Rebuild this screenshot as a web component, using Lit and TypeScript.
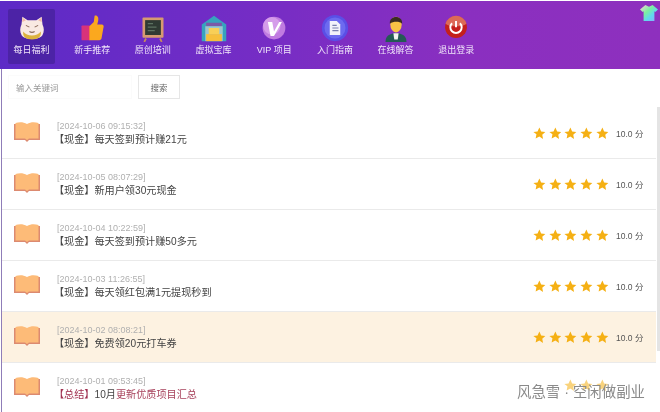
import { LitElement, html, css, svg } from "lit";
import { customElement } from "lit/decorators.js";

const icons: Record<string, unknown> = {
  cat: svg`<path d="M5 3l6 4h10l6-4 1 9c2 4 2 8 0 12-3 6-21 6-24 0-2-4-2-8 0-12z" fill="#f9e9e2"/><path d="M6 20c4 6 16 6 20 0 1 6-3 9-10 9S5 26 6 20z" fill="#dcb23e"/><path d="M9 13l4 2M23 13l-4 2M13 20q3 2 6 0" stroke="#8a6a5a" stroke-width="1.2" fill="none"/><path d="M5 4l4 3-4 2zM27 4l-4 3 4 2z" fill="#f0b8a8"/>`,
  thumb: svg`<rect x="4" y="13" width="10" height="17" rx="1" fill="#d8327a"/><path d="M13 14l5-5 1-7c3-1 5 2 4 6l-1 4h5c2 0 3 2 2 4l-2 11c0 2-2 3-4 3H13z" fill="#fba81e"/>`,
  board: svg`<path d="M8 28l-2 4M24 28l2 4" stroke="#c58a5e" stroke-width="2"/><rect x="4" y="4" width="24" height="23" rx="1" fill="#d69a70"/><rect x="7" y="7" width="18" height="17" fill="#2f3a33"/><path d="M10 11h6M10 15h10M10 19h8" stroke="#5d7261" stroke-width="1.5"/>`,
  store: svg`<path d="M2 12L16 2l14 10v19H2z" fill="#37a3bd"/><path d="M7 10h18v4H7z" fill="#7a5aa8"/><rect x="6" y="14" width="20" height="17" fill="#9bc5cf"/><rect x="10" y="16" width="12" height="7" fill="#f8cf57"/><rect x="7" y="23" width="18" height="8" fill="#f6bf3c"/>`,
  vip: svg`<circle cx="16" cy="16" r="13" fill="#c07be0"/><circle cx="13.500" cy="13.500" r="10" fill="#d59cea"/><path d="M9 9h5l2 11 6-11h3l-9 16h-4z" fill="#fff"/>`,
  doc: svg`<circle cx="16" cy="16" r="15" fill="#5a4fe6"/><circle cx="16" cy="16" r="12" fill="#6d6af0"/><path d="M10 8h8l4 4v12H10z" fill="#f2f2fa"/><path d="M13 13h5M13 16h7M13 19h7" stroke="#7a80b0" stroke-width="1.200"/>`,
  man: svg`<path d="M4 32c0-7 5-10 12-10s12 3 12 10z" fill="#245a55"/><path d="M13 22h6l-1 7h-4z" fill="#f4f4f0"/><ellipse cx="16" cy="12" rx="6.500" ry="9" fill="#f8c345"/><path d="M9 11C8 1 24 1 23 11c-3-3-10-3-14 0z" fill="#3a2c22"/>`,
  power: svg`<circle cx="16" cy="15" r="12.500" fill="#c4201c"/><path d="M4 11a12.500 12.500 0 0 1 24 0c-5 4-19 4-24 0z" fill="#dc6a58"/><path d="M11.500 10.500a6.500 6.500 0 1 0 9 0" stroke="#fff" stroke-width="2.200" fill="none"/><path d="M16 8v7" stroke="#fff" stroke-width="2.200"/>`,
};

const nav = [
  ["cat", "每日福利"], ["thumb", "新手推荐"], ["board", "原创培训"], ["store", "虚拟宝库"],
  ["vip", "VIP 项目"], ["doc", "入门指南"], ["man", "在线解答"], ["power", "退出登录"],
];

const rows = [
  ["2024-10-06 09:15:32", "【现金】", "", "每天签到预计赚21元"],
  ["2024-10-05 08:07:29", "【现金】", "", "新用户领30元现金"],
  ["2024-10-04 10:22:59", "【现金】", "", "每天签到预计赚50多元"],
  ["2024-10-03 11:26:55", "【现金】", "", "每天领红包满1元提现秒到"],
  ["2024-10-02 08:08:21", "【现金】", "", "免费领20元打车券"],
  ["2024-10-01 09:53:45", "【总结】", "10月", "更新优质项目汇总"],
];

@customElement("app-root")
export class AppRoot extends LitElement {
  static styles = css`
    :host {
      display: block; position: relative; width: 660px; height: 412px; overflow: hidden; background: #fff;
      font-family: "Liberation Sans", "Noto Sans CJK SC", sans-serif; color: #333; filter: blur(0.4px);
    }
    .top { height: 68px; margin-top: 1px; display: flex; padding: 8px 0 0 8px; box-sizing: border-box;
      background: linear-gradient(90deg, #5c2ac6 0%, #6f2cc6 30%, #8a2fc0 70%, #8e30be 100%); }
    .item { width: 47px; height: 55px; margin-right: 13.700px; display: flex; flex-direction: column; align-items: center;
      padding-top: 5px; box-sizing: border-box; color: #efe4f9; font-size: 9px; line-height: 11px; white-space: nowrap; flex: none; }
    .item.on { background: #4c23a6; border-radius: 2px; }
    .item svg { width: 28px; height: 28px; margin-bottom: 3px; }
    .shirt { position: absolute; right: 2px; top: 4px; width: 18px; height: 18px; }
    .main { margin-left: 1px; border-left: 1px solid #8f7db8; height: 343px; }
    .search { height: 39px; display: flex; gap: 6px; padding: 6px 0 0 6px; box-sizing: border-box; }
    .input { width: 124px; height: 24px; box-sizing: border-box; border: 1px solid #fbfbfb; font-size: 8.500px; color: #999;
      display: flex; align-items: center; padding-left: 7px; }
    .btn { width: 42px; height: 24px; box-sizing: border-box; border: 1px solid #e6e6e6; font-size: 8.500px; color: #666;
      display: flex; align-items: center; justify-content: center; }
    .row { height: 51px; box-sizing: border-box; display: flex; align-items: center; width: 654px; border-bottom: 1px solid #eaeaea; padding-left: 12px; }
    .row.hot { background: #fdf2e1; }
    .book { width: 26px; height: 22px; flex: none; margin-right: 14px; margin-top: -2px; }
    .text { flex: 1; }
    .date { font-size: 9px; color: #b0b0b0; margin-left: 3px; line-height: 13px; }
    .title { font-size: 10.150px; color: #444; line-height: 13px; }
    .title.red .tag { color: #a03050; }
    .title.red .tail { color: #a8425c; }
    .stars { display: flex; gap: 3px; margin-right: 7.500px; }
    .stars svg { width: 12.700px; height: 12.700px; }
    .stars svg.veil { visibility: hidden; }
    .stars.faded { opacity: .55; margin-top: -6px; }
    .score { font-size: 8.500px; color: #555; width: 40px; }
    .thumbbar { position: absolute; right: 0; top: 107px; width: 3px; height: 244px; background: #e4e4e4; }
    .mark { position: absolute; left: 517px; top: 383px; font-size: 14.400px; line-height: 18px; color: #8a8a8a; white-space: nowrap; }
  `;

  render() {
    return html`
      <div class="top">
        ${nav.map(([k, t], i) => html`<div class="item ${i === 0 ? "on" : ""}"><svg viewBox="0 0 32 32">${icons[k]}</svg>${t}</div>`)}
      </div>
      <svg class="shirt" viewBox="0 0 20 20">
        <defs><linearGradient id="g" x1="0" y1="0" x2="1" y2="1"><stop offset="0" stop-color="#ffd0d8"/><stop offset=".4" stop-color="#7af0a0"/><stop offset=".65" stop-color="#60d8f0"/><stop offset="1" stop-color="#90a8ff"/></linearGradient></defs>
        <path d="M6 1l4 2 4-2 6 5-3 3-1-1v11H4V8L3 9 0 6z" fill="url(#g)"/>
      </svg>
      <div class="main">
        <div class="search">
          <div class="input">输入关键词</div>
          <div class="btn">搜索</div>
        </div>
        ${rows.map((r, i) => html`
          <div class="row ${i === 4 ? "hot" : ""}">
            <svg class="book" viewBox="0 0 26 22">
              <path d="M0 3h2l11 2 11-2h2v16H15l-2 2-2-2H0z" fill="#dc8a70"/>
              <path d="M1.500 2c4-1 8-1 11.500 1 3.500-2 7.500-2 11.500-1v15.500H15l-2 1.500-2-1.500H1.500z" fill="#fdbb78"/>
            </svg>
            <div class="text">
              <div class="date">[${r[0]}]</div>
              <div class="title ${i === 5 ? "red" : ""}"><span class="tag">${r[1]}</span>${r[2]}<span class="tail">${r[3]}</span></div>
            </div>
            <div class="stars ${i === 5 ? "faded" : ""}">
              ${[0, 1, 2, 3, 4].map((n) => svg`<svg class="${i === 5 && n < 2 ? "veil" : ""}" viewBox="0 0 24 24"><path d="M12 1l3.400 7.300 7.900 1-5.800 5.500 1.500 7.900L12 18l-7 3.700 1.500-7.900L.7 9.300l7.900-1z" fill="#f5b014"/></svg>`)}
            </div>
            <div class="score">${i === 5 ? "" : "10.0 分"}</div>
          </div>`)}
      </div>
      <div class="thumbbar"></div>
      <div class="mark">风急雪 · 空闲做副业</div>
    `;
  }
}
